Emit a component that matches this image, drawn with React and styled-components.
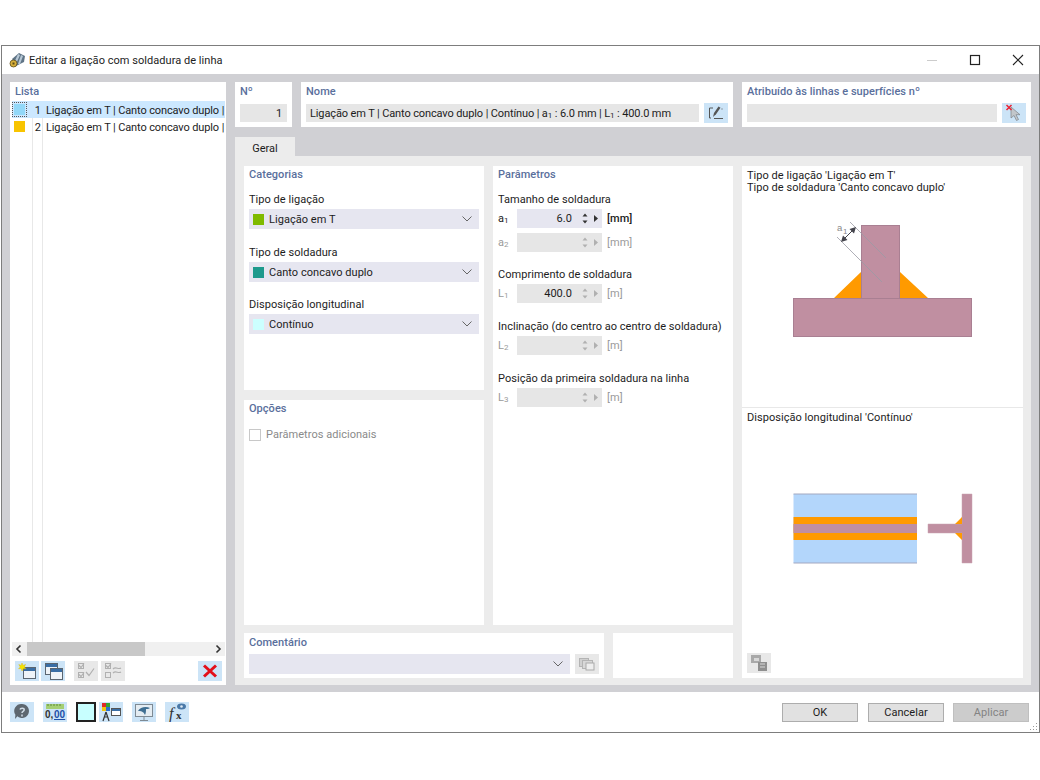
import React from "react";
import styled, { createGlobalStyle } from "styled-components";

const GlobalStyle = createGlobalStyle`
  html, body { margin: 0; padding: 0; background: #fff; }
  body {
    font-family: Roboto, "Noto Sans", "Liberation Sans", sans-serif;
    font-size: 11px;
    letter-spacing: 0.04px;
    color: #1c1c1c;
  }
  * { box-sizing: border-box; }
`;

const Page = styled.div`
  width: 1040px;
  height: 780px;
  padding: 45px 0 0 1px;
`;
const Window = styled.div`
  width: 1039px;
  height: 688px;
  border: 1px solid #7d7d7d;
  display: flex;
  flex-direction: column;
`;
const TitleBar = styled.div`
  height: 28px;
  display: flex;
  align-items: center;
  padding-left: 7px;
  background: #fff;
`;
const TitleText = styled.span`
  flex: 1;
  margin-left: 3px;
`;
const WinButton = styled.div`
  width: 43px;
  height: 28px;
  display: grid;
  place-items: center;
`;
const Body = styled.div`
  height: 618px;
  background: #d0d0d4;
  padding: 8px 8px 7px 8px;
  display: flex;
  gap: 9px;
`;
const ListPanel = styled.div`
  width: 216px;
  background: #fff;
  display: flex;
  flex-direction: column;
  padding: 3px 1px 4px 2px;
`;
const SectionTitle = styled.div`
  color: #5a6f9c;
  font-weight: 500;
  line-height: 13px;
  padding-left: ${(p) => p.$indent || 0}px;
`;
const ListBody = styled.div`
  flex: 1;
  margin-top: 3px;
  background:
    linear-gradient(#e8e8e8, #e8e8e8) 20px 0 / 1px 100% no-repeat,
    linear-gradient(#e8e8e8, #e8e8e8) 30px 0 / 1px 100% no-repeat;
  overflow: hidden;
`;
const ListRow = styled.div`
  height: 17px;
  display: flex;
  align-items: center;
  background: ${(p) => (p.$selected ? "#cce8ff" : "transparent")};
  white-space: nowrap;
`;
const RowSwatchCell = styled.div`
  width: 21px;
  height: 100%;
  padding-left: 2px;
  display: flex;
  align-items: center;
  flex: none;
`;
const RowSwatch = styled.div`
  width: 11px;
  height: 11px;
  background: ${(p) => p.$color};
  outline: ${(p) => (p.$focus ? "1px dotted #555" : "none")};
  outline-offset: 1px;
`;
const RowNumber = styled.div`
  width: 13px;
  text-align: right;
  padding: 2px 5px 0 0;
  flex: none;
`;
const RowText = styled.div`
  padding-top: 2px;
  letter-spacing: -0.12px;
`;
const ScrollBar = styled.div`
  height: 14px;
  background: #f0f0f0;
  display: flex;
  align-items: center;
  justify-content: space-between;
  position: relative;
  margin-bottom: 5px;
`;
const ScrollThumb = styled.div`
  position: absolute;
  left: 15px;
  top: 0;
  bottom: 0;
  width: 118px;
  background: #c8c8c8;
`;
const ListTools = styled.div`
  display: flex;
  align-items: center;
  padding: 0 3px;
  height: 20px;
`;
const ToolButton = styled.div`
  width: 24px;
  height: 20px;
  display: grid;
  place-items: center;
  flex: none;
  background: ${(p) => (p.$disabled ? "#e8e8e8" : "#cce4f7")};
  margin-left: ${(p) => p.$gap || 0}px;
`;
const Right = styled.div`
  flex: 1;
  display: flex;
  flex-direction: column;
`;
const TopRow = styled.div`
  display: grid;
  grid-template-columns: 57px 432px 289px;
  gap: 9px;
  height: 45px;
`;
const TopPanel = styled.div`
  background: #fff;
  padding: 3px 5px 0;
`;
const FieldRow = styled.div`
  display: flex;
  gap: 5px;
  margin-top: 5px;
  min-height: 20px;
  align-items: center;
`;
const ReadOnlyField = styled.div`
  flex: 1;
  min-width: 0;
  height: 18px;
  background: #e6e6e6;
  line-height: 20px;
  padding: 0 5px 0 4px;
  text-align: ${(p) => (p.$right ? "right" : "left")};
  white-space: nowrap;
  overflow: hidden;
  letter-spacing: -0.12px;
`;
const Small = styled.span`
  font-size: 8px;
  position: relative;
  top: 1px;
`;
const Tab = styled.div`
  width: 60px;
  height: 19px;
  margin-top: 10px;
  background: #ececec;
  text-align: center;
  line-height: 24px;
`;
const TabContent = styled.div`
  flex: 1;
  background: #ececec;
  padding: 10px 8px 7px 9px;
  display: grid;
  grid-template-columns: 489px 281px;
  gap: 9px;
`;
const LeftArea = styled.div`
  display: flex;
  flex-direction: column;
  gap: 8px;
`;
const Columns = styled.div`
  display: grid;
  grid-template-columns: 240px 240px;
  gap: 9px;
  height: 459px;
`;
const Stack = styled.div`
  display: grid;
  grid-template-rows: 224px 225px;
  gap: 10px;
`;
const Panel = styled.div`
  background: #fff;
  padding: 2px 5px 0;
`;
const FieldLabel = styled.div`
  line-height: 16px;
  margin-top: ${(p) => p.$top}px;
  white-space: nowrap;
`;
const Combo = styled.div`
  height: 20px;
  flex: ${(p) => (p.$fill ? 1 : "none")};
  margin-top: ${(p) => (p.$fill ? 0 : 1)}px;
  background: #e6e6f0;
  display: flex;
  align-items: center;
  padding: 0 6px 0 4px;
  gap: 5px;
`;
const ComboSwatch = styled.div`
  width: 11px;
  height: 11px;
  background: ${(p) => p.$color};
`;
const ComboText = styled.div`
  flex: 1;
`;
const CheckRow = styled.div`
  display: flex;
  align-items: center;
  gap: 5px;
  margin-top: 13px;
  color: #8a8a8a;
`;
const CheckBox = styled.div`
  width: 12px;
  height: 12px;
  border: 1px solid #c8c8c8;
  background: #fff;
`;
const ParamRow = styled.div`
  display: flex;
  align-items: center;
  height: 19px;
  margin-top: ${(p) => p.$top}px;
  color: ${(p) => (p.$active ? "#1c1c1c" : "#9a9a9a")};
`;
const ParamName = styled.div`
  width: 19px;
`;
const Spin = styled.div`
  width: 85px;
  height: 19px;
  background: ${(p) => (p.$active ? "#e6e6f0" : "#e6e6e6")};
  display: flex;
  align-items: center;
  justify-content: flex-end;
  padding-right: 3px;
  gap: 4px;
  color: #1c1c1c;
`;
const SpinValue = styled.div`
  flex: 1;
  text-align: right;
  padding-right: 5px;
`;
const Unit = styled.div`
  margin-left: 5px;
  font-weight: ${(p) => (p.$active ? 500 : 400)};
`;
const BottomRow = styled.div`
  display: grid;
  grid-template-columns: 360px 120px;
  gap: 9px;
  height: 45px;
`;
const CommentPanel = styled.div`
  background: #fff;
  padding: 3px 5px 0;
`;
const BlankPanel = styled.div`
  background: #fff;
`;
const PicturePanel = styled.div`
  background: #fff;
  display: flex;
  flex-direction: column;
  height: 512px;
`;
const PictureSection = styled.div`
  height: ${(p) => p.$height}px;
  border-bottom: ${(p) => (p.$line ? "1px solid #e8e8e8" : "none")};
  padding: ${(p) => p.$top}px 0 5px;
  display: flex;
  flex-direction: column;
`;
const Caption = styled.div`
  padding-left: 5px;
  line-height: 12px;
`;
const Drawing = styled.svg`
  display: block;
  width: 281px;
  flex: none;
  margin-top: ${(p) => p.$top}px;
`;
const PictureTools = styled.div`
  margin-top: auto;
  padding-left: 5px;
`;
const Footer = styled.div`
  flex: 1;
  background: #fff;
  display: flex;
  align-items: flex-start;
  padding: 10px 10px 0 8px;
  position: relative;
`;
const Swatch = styled.div`
  width: 20px;
  height: 20px;
  margin-left: 9px;
  background: #c8ffff;
  border: 2px solid #222;
`;
const FooterSpacer = styled.div`
  flex: 1;
`;
const DialogButton = styled.div`
  width: 76px;
  height: 19px;
  margin: 1px 0 0 ${(p) => p.$gap || 0}px;
  background: ${(p) => (p.$disabled ? "#cccccc" : "#e1e1e1")};
  border: 1px solid ${(p) => (p.$disabled ? "#bfbfbf" : "#adadad")};
  color: ${(p) => (p.$disabled ? "#838383" : "#1c1c1c")};
  text-align: center;
  line-height: 17px;
`;
const Grip = styled.svg`
  position: absolute;
  right: 1px;
  bottom: 1px;
`;

const Chevron = () => (
  <svg width="12" height="8" viewBox="0 0 12 8">
    <path d="M1.5 1.5L6 6l4.5-4.5" fill="none" stroke="#666" strokeWidth="1" />
  </svg>
);

const Spinner = ({ active }) => {
  const c = active ? "#333" : "#b0b0b0";
  return (
    <>
      <svg width="8" height="13" viewBox="0 0 8 13">
        <path d="M4 1.5L6.5 4.5h-5z M4 11.5L1.5 8.5h5z" fill={c} />
      </svg>
      <svg width="6" height="9" viewBox="0 0 6 9">
        <path d="M1 1l4 3.5L1 8z" fill={c} />
      </svg>
    </>
  );
};

const AppIcon = () => (
  <svg width="17" height="16" viewBox="0 0 17 16">
    <path d="M3 7l7-6 6 3-1 6-8 4z" fill="#5f7486" />
    <path d="M9 2l2 1-4 9-2-1zM12 3l2 1-3 8-2 0z" fill="#b7c8d6" />
    <circle cx="4.5" cy="11.5" r="3.5" fill="#d9b13a" stroke="#5a4a1a" strokeWidth=".8" />
    <rect x="3.5" y="10.5" width="2" height="2" fill="#5a4a1a" />
  </svg>
);

const WindowIcon = ({ x = 0, y = 0, w = 12, h = 11 }) => (
  <g transform={`translate(${x} ${y})`}>
    <rect x=".5" y=".5" width={w} height={h} fill="#eef3f8" stroke="#5a6570" />
    <rect x="1" y="1" width={w - 1} height="3" fill="#3a6ea5" />
  </g>
);

const NewIcon = () => (
  <svg width="20" height="18" viewBox="0 0 20 18">
    <WindowIcon x={6} y={5} />
    <path d="M5 1l1 2.4L8.5 2.4 7.4 5 9 6.8 6.6 6.6 5 9 4.2 6.6 1.6 6.8 3.2 5 1.8 2.6l2.4.8z" fill="#f5e400" stroke="#d8b400" strokeWidth=".4" />
  </svg>
);

const CopyIcon = () => (
  <svg width="20" height="18" viewBox="0 0 20 18">
    <WindowIcon x={2} y={1} />
    <WindowIcon x={7} y={6} />
  </svg>
);

const CheckAllIcon = () => (
  <svg width="20" height="18" viewBox="0 0 20 18" fill="none" stroke="#b0b0b0">
    <rect x="2.5" y="1.5" width="5" height="5" />
    <rect x="2.5" y="10.5" width="5" height="5" />
    <path d="M3 3.5l2 2 3-4M3 12.5l2 2 3-4M10 10l3 3.5 5-7" strokeWidth="1.2" />
  </svg>
);

const CheckSwapIcon = () => (
  <svg width="20" height="18" viewBox="0 0 20 18" fill="none" stroke="#b0b0b0">
    <rect x="2.5" y="1.5" width="5" height="5" />
    <rect x="2.5" y="10.5" width="5" height="5" />
    <path d="M3 3.5l2 2 3-4M10 7c3-3 5 1 8-1M10 11c3-3 5 1 8-1" strokeWidth="1.2" />
  </svg>
);

const DeleteIcon = () => (
  <svg width="16" height="14" viewBox="0 0 16 14">
    <path d="M2 1.5l12 11M14 1.5l-12 11" stroke="#e3101a" strokeWidth="3" />
  </svg>
);

const EditIcon = () => (
  <svg width="18" height="16" viewBox="0 0 18 16" fill="none" stroke="#555">
    <path d="M6 3H2.5v10H4M7 13.5h9" />
    <path d="M6 12l1-4 4.5-6.5 2 1.2L9 9.2z" fill="#555" stroke="none" />
    <path d="M14.5 4h2" strokeDasharray="1 1" />
  </svg>
);

const PickIcon = () => (
  <svg width="18" height="18" viewBox="0 0 18 18">
    <path d="M6 3l0 11 3-2.5 2.5 5 2-1-2.5-4.8 4 0z" fill="#c2c6ca" stroke="#7c8288" strokeWidth=".7" />
    <path d="M1.5 1l5 5M6.5 1l-5 5" stroke="#ea2434" strokeWidth="1.5" />
  </svg>
);

const GreyCopyIcon = () => (
  <svg width="18" height="16" viewBox="0 0 18 16">
    <rect x="1.5" y="2.5" width="9" height="8" fill="#d0d0d0" stroke="#b4b4b4" />
    <rect x="4.5" y="4.5" width="10" height="8" fill="#d8d8d8" stroke="#b4b4b4" />
    <rect x="8" y="7" width="8" height="7" fill="#eee" stroke="#aaa" />
  </svg>
);

const GreyPicIcon = () => (
  <svg width="20" height="18" viewBox="0 0 20 18">
    <rect x="2" y="1" width="10" height="8" fill="#a9a9a9" />
    <rect x="5" y="4" width="5" height="3" fill="#d8d8d8" />
    <rect x="9" y="8" width="9" height="9" fill="#8f8f8f" />
    <path d="M11 10h5M11 13h5" stroke="#d8d8d8" />
  </svg>
);

const HelpIcon = () => (
  <svg width="20" height="18" viewBox="0 0 20 18">
    <path d="M10 1a7 7 0 1 1-4.6 12.3L3 16l.4-4.2A7 7 0 0 1 10 1z" fill="#5d6770" />
    <path d="M8 6.5c.4-1.6 4.2-1.8 4.2.3 0 1.6-2.2 1.6-2.2 3.2M10 11.5v2" stroke="#cfdbe6" strokeWidth="1.5" fill="none" />
  </svg>
);

const ZeroIcon = () => (
  <svg width="22" height="18" viewBox="0 0 22 18">
    <rect x="2" y="1" width="18" height="5" fill="#a4cf74" />
    <path d="M4 1v2M7 1v2M10 1v2M13 1v2M16 1v2" stroke="#5f8a3a" />
    <text x="1" y="15" fontFamily="Liberation Sans" fontWeight="700" fontSize="10" fill="#333">0,</text>
    <text x="10" y="15" fontFamily="Liberation Sans" fontWeight="700" fontSize="10" fill="#1e4fa8" textDecoration="underline">00</text>
  </svg>
);

const TreeIcon = () => (
  <svg width="22" height="20" viewBox="0 0 22 20">
    <rect x="2" y="1" width="4" height="4" fill="#e02a2a" />
    <rect x="6" y="1" width="4" height="4" fill="#35a535" />
    <rect x="2" y="5" width="4" height="4" fill="#f1c40f" />
    <rect x="6" y="5" width="4" height="4" fill="#2a6fd0" />
    <path d="M6 10l-3 9M6 10l3 9M4 15h4" stroke="#333" strokeWidth="1.2" fill="none" />
    <rect x="11.5" y="6.5" width="9" height="7" fill="#fff" stroke="#555" />
    <rect x="12" y="7" width="8" height="2" fill="#3a6ea5" />
  </svg>
);

const MonitorIcon = () => (
  <svg width="22" height="20" viewBox="0 0 22 20">
    <rect x="2.5" y="2.5" width="17" height="12" fill="#e4ecf2" stroke="#7e8a94" />
    <path d="M5 9c2-4 8-5 12-3-1 1-3 1-4 1 0 2 0 4-1 6-1-2-2-4-7-4z" fill="#3f6f93" />
    <path d="M11 15v3M7 18.5h8" stroke="#7e8a94" />
  </svg>
);

const FxIcon = () => (
  <svg width="22" height="20" viewBox="0 0 22 20">
    <ellipse cx="15.5" cy="4.5" rx="4.5" ry="3" fill="#4a79a8" />
    <circle cx="15.5" cy="4.5" r="1.3" fill="#dfe9f2" />
    <text x="3" y="17" fontFamily="Liberation Serif" fontStyle="italic" fontSize="16" fill="#333">f</text>
    <text x="10" y="17" fontFamily="Liberation Serif" fontWeight="700" fontSize="11" fill="#333">x</text>
  </svg>
);

const ParamField = ({ name, sub, value, unit, active, top }) => (
  <ParamRow $active={active} $top={top}>
    <ParamName>
      {name}
      <Small>{sub}</Small>
    </ParamName>
    <Spin $active={active}>
      <SpinValue>{value}</SpinValue>
      <Spinner active={active} />
    </Spin>
    <Unit $active={active}>{unit}</Unit>
  </ParamRow>
);

const ComboBox = ({ color, text, fill }) => (
  <Combo $fill={fill}>
    {color && <ComboSwatch $color={color} />}
    <ComboText>{text}</ComboText>
    <Chevron />
  </Combo>
);

const App = () => {
  return (
    <Page>
      <GlobalStyle />
      <Window>
        <TitleBar>
          <AppIcon />
          <TitleText>Editar a ligação com soldadura de linha</TitleText>
          <WinButton>
            <svg width="12" height="12" viewBox="0 0 12 12">
              <path d="M1 6.5h10" stroke="#ccc" />
            </svg>
          </WinButton>
          <WinButton>
            <svg width="12" height="12" viewBox="0 0 12 12">
              <rect x="1.5" y="1.5" width="9" height="9" fill="none" stroke="#222" strokeWidth="1.2" />
            </svg>
          </WinButton>
          <WinButton>
            <svg width="12" height="12" viewBox="0 0 12 12">
              <path d="M1 1l10 10M11 1L1 11" stroke="#222" strokeWidth="1.1" />
            </svg>
          </WinButton>
        </TitleBar>
        <Body>
          <ListPanel>
            <SectionTitle $indent={3}>Lista</SectionTitle>
            <ListBody>
              <ListRow $selected>
                <RowSwatchCell>
                  <RowSwatch $color="#92d8f8" $focus />
                </RowSwatchCell>
                <RowNumber>1</RowNumber>
                <RowText>Ligação em T | Canto concavo duplo |</RowText>
              </ListRow>
              <ListRow>
                <RowSwatchCell>
                  <RowSwatch $color="#f8c400" />
                </RowSwatchCell>
                <RowNumber>2</RowNumber>
                <RowText>Ligação em T | Canto concavo duplo |</RowText>
              </ListRow>
            </ListBody>
            <ScrollBar>
              <svg width="14" height="14" viewBox="0 0 14 14">
                <path d="M8.5 3.5L5 7l3.5 3.5" fill="none" stroke="#333" strokeWidth="1.6" />
              </svg>
              <ScrollThumb />
              <svg width="14" height="14" viewBox="0 0 14 14">
                <path d="M5.5 3.5L9 7l-3.5 3.5" fill="none" stroke="#333" strokeWidth="1.6" />
              </svg>
            </ScrollBar>
            <ListTools>
              <ToolButton>
                <NewIcon />
              </ToolButton>
              <ToolButton $gap={2}>
                <CopyIcon />
              </ToolButton>
              <ToolButton $disabled $gap={9}>
                <CheckAllIcon />
              </ToolButton>
              <ToolButton $disabled $gap={3}>
                <CheckSwapIcon />
              </ToolButton>
              <ToolButton $gap={73}>
                <DeleteIcon />
              </ToolButton>
            </ListTools>
          </ListPanel>
          <Right>
            <TopRow>
              <TopPanel>
                <SectionTitle>Nº</SectionTitle>
                <FieldRow>
                  <ReadOnlyField $right>1</ReadOnlyField>
                </FieldRow>
              </TopPanel>
              <TopPanel>
                <SectionTitle>Nome</SectionTitle>
                <FieldRow>
                  <ReadOnlyField>
                    Ligação em T | Canto concavo duplo | Contínuo | a<Small>1</Small> : 6.0 mm | L<Small>1</Small> : 400.0 mm
                  </ReadOnlyField>
                  <ToolButton>
                    <EditIcon />
                  </ToolButton>
                </FieldRow>
              </TopPanel>
              <TopPanel>
                <SectionTitle>Atribuído às linhas e superfícies nº</SectionTitle>
                <FieldRow>
                  <ReadOnlyField />
                  <ToolButton>
                    <PickIcon />
                  </ToolButton>
                </FieldRow>
              </TopPanel>
            </TopRow>
            <Tab>Geral</Tab>
            <TabContent>
              <LeftArea>
                <Columns>
                  <Stack>
                    <Panel>
                      <SectionTitle>Categorias</SectionTitle>
                      <FieldLabel $top={11}>Tipo de ligação</FieldLabel>
                      <ComboBox color="#7fba00" text="Ligação em T" />
                      <FieldLabel $top={16}>Tipo de soldadura</FieldLabel>
                      <ComboBox color="#1e9a8c" text="Canto concavo duplo" />
                      <FieldLabel $top={15}>Disposição longitudinal</FieldLabel>
                      <ComboBox color="#ccffff" text="Contínuo" />
                    </Panel>
                    <Panel>
                      <SectionTitle>Opções</SectionTitle>
                      <CheckRow>
                        <CheckBox />
                        Parâmetros adicionais
                      </CheckRow>
                    </Panel>
                  </Stack>
                  <Panel>
                    <SectionTitle>Parâmetros</SectionTitle>
                    <FieldLabel $top={11}>Tamanho de soldadura</FieldLabel>
                    <ParamField name="a" sub="1" value="6.0" unit="[mm]" active top={1} />
                    <ParamField name="a" sub="2" unit="[mm]" top={5} />
                    <FieldLabel $top={15}>Comprimento de soldadura</FieldLabel>
                    <ParamField name="L" sub="1" value="400.0" unit="[m]" top={1} />
                    <FieldLabel $top={16}>Inclinação (do centro ao centro de soldadura)</FieldLabel>
                    <ParamField name="L" sub="2" unit="[m]" top={1} />
                    <FieldLabel $top={16}>Posição da primeira soldadura na linha</FieldLabel>
                    <ParamField name="L" sub="3" unit="[m]" top={1} />
                  </Panel>
                </Columns>
                <BottomRow>
                  <CommentPanel>
                    <SectionTitle>Comentário</SectionTitle>
                    <FieldRow>
                      <ComboBox fill />
                      <ToolButton $disabled>
                        <GreyCopyIcon />
                      </ToolButton>
                    </FieldRow>
                  </CommentPanel>
                  <BlankPanel />
                </BottomRow>
              </LeftArea>
              <PicturePanel>
                <PictureSection $height={242} $top={4} $line>
                  <Caption>Tipo de ligação 'Ligação em T'</Caption>
                  <Caption>Tipo de soldadura 'Canto concavo duplo'</Caption>
                  <Drawing $top={26} viewBox="742 220 281 120" height="120">
                    <rect x="793.5" y="298.5" width="178" height="38" fill="#c08fa1" stroke="#a97f92" />
                    <rect x="861.5" y="225.5" width="38" height="73" fill="#c08fa1" stroke="#a97f92" />
                    <path d="M834 298l27-26v26zM900 272l28 26h-28z" fill="#ff9a00" />
                    <path d="M850 222l36 36M837 237l45 45" stroke="#9a9aa4" strokeWidth=".8" fill="none" />
                    <path d="M843 240l11-11" stroke="#44444c" strokeWidth="1" />
                    <path d="M856 227l-6.5 2 4.5 4.5zM841 242l6.5-2-4.5-4.5z" fill="#44444c" />
                    <text x="837" y="231" fontFamily="Liberation Sans" fontSize="9.5" fill="#8a8a8a">a</text>
                    <text x="843" y="234" fontFamily="Liberation Sans" fontSize="8" fill="#8a8a8a">1</text>
                  </Drawing>
                </PictureSection>
                <PictureSection $height={270} $top={4}>
                  <Caption>Disposição longitudinal 'Contínuo'</Caption>
                  <Drawing $top={66} viewBox="742 490 281 80" height="80">
                    <rect x="793.5" y="494" width="123.5" height="69" fill="#b3d6fb" />
                    <path d="M793.5 494h123.5M793.5 563h123.5" stroke="#a3a8c0" />
                    <rect x="793.5" y="517" width="123.5" height="23" fill="#ff9a00" />
                    <rect x="793.5" y="524" width="123.5" height="9" fill="#c08fa1" />
                    <path d="M928 524h34v-30h10v69h-10v-30h-34z" fill="#c08fa1" stroke="#c9a4b2" strokeWidth=".5" />
                    <path d="M962 517l-7 7h7zM962 540l-7-7h7z" fill="#ff9a00" />
                  </Drawing>
                  <PictureTools>
                    <ToolButton $disabled>
                      <GreyPicIcon />
                    </ToolButton>
                  </PictureTools>
                </PictureSection>
              </PicturePanel>
            </TabContent>
          </Right>
        </Body>
        <Footer>
          <ToolButton>
            <HelpIcon />
          </ToolButton>
          <ToolButton $gap={9}>
            <ZeroIcon />
          </ToolButton>
          <Swatch />
          <ToolButton $gap={3}>
            <TreeIcon />
          </ToolButton>
          <ToolButton $gap={9}>
            <MonitorIcon />
          </ToolButton>
          <ToolButton $gap={9}>
            <FxIcon />
          </ToolButton>
          <FooterSpacer />
          <DialogButton>OK</DialogButton>
          <DialogButton $gap={10}>Cancelar</DialogButton>
          <DialogButton $gap={9} $disabled>
            Aplicar
          </DialogButton>
          <Grip width="10" height="10" viewBox="0 0 10 10">
            <path d="M8 2h1v1H8zM5 5h1v1H5zM8 5h1v1H8zM2 8h1v1H2zM5 8h1v1H5zM8 8h1v1H8z" fill="#999" />
          </Grip>
        </Footer>
      </Window>
    </Page>
  );
};

export default App;
